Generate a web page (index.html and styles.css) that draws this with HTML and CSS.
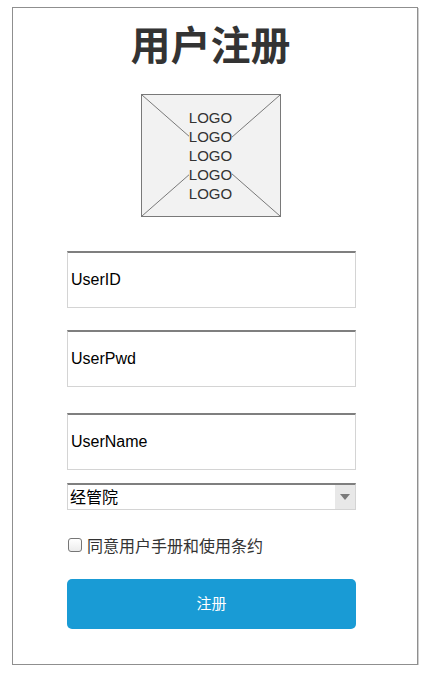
FILE: index.html
```html
<!DOCTYPE html>
<html lang="zh">
<head>
  <meta charset="UTF-8" />
  <meta name="viewport" content="width=device-width, initial-scale=1.0"/>
  <title>用户注册</title>
  <link rel="stylesheet" href="styles.css">
</head>
<body>
  <div class="frame">
    <div class="form">
      <h1 class="title">用户注册</h1>

      <div class="logo">
        <svg class="logo-cross" viewBox="0 0 138 121" preserveAspectRatio="none">
          <line x1="0" y1="0" x2="138" y2="121" />
          <line x1="138" y1="0" x2="0" y2="121" />
        </svg>
        <div class="logo-text">LOGO<br>LOGO<br>LOGO<br>LOGO<br>LOGO</div>
      </div>

      <input class="field field-id" type="text" value="UserID" />
      <input class="field field-pwd" type="text" value="UserPwd" />
      <input class="field field-name" type="text" value="UserName" />

      <div class="select">
        <span class="select-value">经管院</span>
        <span class="select-arrow"><span class="triangle"></span></span>
      </div>

      <label class="agree">
        <span class="check"></span>
        同意用户手册和使用条约
      </label>

      <button type="submit" class="submit-btn">注册</button>
    </div>
  </div>
</body>
</html>
```

FILE: styles.css
```css
body {
  margin: 0;
  font-family: "Liberation Sans", "Noto Sans CJK SC", sans-serif;
  color: #333333;
  background-color: #ffffff;
}

.frame {
  margin: 7px 0 0 12px;
  width: 404px;
  height: 656px;
  border: 1px solid #8f8f8f;
  box-shadow: 1px 1px 0 #cfcfcf;
}

.form {
  width: 289px;
  margin-left: 54px;
  display: flex;
  flex-direction: column;
}

.title {
  margin: 11px 0 0 -2px;
  height: 48px;
  font-family: "Noto Sans CJK SC", sans-serif;
  font-size: 40px;
  line-height: 48px;
  font-weight: bold;
  text-align: center;
  color: #333333;
}

.logo {
  position: relative;
  align-self: center;
  display: flex;
  justify-content: center;
  align-items: center;
  margin: 27px 0 0 -2px;
  width: 138px;
  height: 121px;
  background-color: #f2f2f2;
  border: 1px solid #797979;
}

.logo-cross {
  position: absolute;
  left: 0;
  top: 0;
  width: 100%;
  height: 100%;
}

.logo-cross line {
  stroke: #797979;
  stroke-width: 1;
}

.logo-text {
  position: relative;
  padding: 1px 0;
  font-size: 15px;
  line-height: 19px;
  text-align: center;
  color: #333333;
  background-color: #f2f2f2;
}

.field {
  box-sizing: border-box;
  width: 289px;
  height: 57px;
  padding: 0 0 0 3px;
  border: 1px solid #d4d4d4;
  border-top: 2px solid #7f7f7f;
  font-family: "Liberation Sans", "Noto Sans CJK SC", sans-serif;
  font-size: 16px;
  color: #000000;
  outline: none;
}

.field-id {
  margin-top: 34px;
}

.field-pwd {
  margin-top: 22px;
}

.field-name {
  margin-top: 26px;
}

.select {
  box-sizing: border-box;
  display: flex;
  margin-top: 13px;
  height: 27px;
  border: 1px solid #d4d4d4;
  border-top: 2px solid #7f7f7f;
}

.select-value {
  flex: 1;
  padding-left: 2px;
  font-family: "Noto Sans CJK SC", sans-serif;
  font-size: 16px;
  line-height: 23px;
  color: #000000;
}

.select-arrow {
  width: 20px;
  display: flex;
  align-items: center;
  justify-content: center;
  background-color: #e8e8e8;
}

.triangle {
  width: 0;
  height: 0;
  border-left: 5px solid transparent;
  border-right: 5px solid transparent;
  border-top: 6px solid #7a7a7a;
}

.agree {
  display: flex;
  align-items: center;
  gap: 5px;
  margin-top: 25px;
  height: 20px;
  font-family: "Noto Sans CJK SC", sans-serif;
  font-size: 16px;
  color: #333333;
}

.check {
  box-sizing: border-box;
  margin-left: 1px;
  width: 14px;
  height: 14px;
  border: 1px solid #767676;
  border-radius: 3px;
  background: linear-gradient(#ffffff, #ececec);
}

.submit-btn {
  margin-top: 24px;
  height: 50px;
  padding: 0 0 4px;
  border: none;
  border-radius: 5px;
  background-color: #199bd5;
  color: #ffffff;
  font-family: "Noto Sans CJK SC", sans-serif;
  font-size: 15px;
  cursor: pointer;
}
```
